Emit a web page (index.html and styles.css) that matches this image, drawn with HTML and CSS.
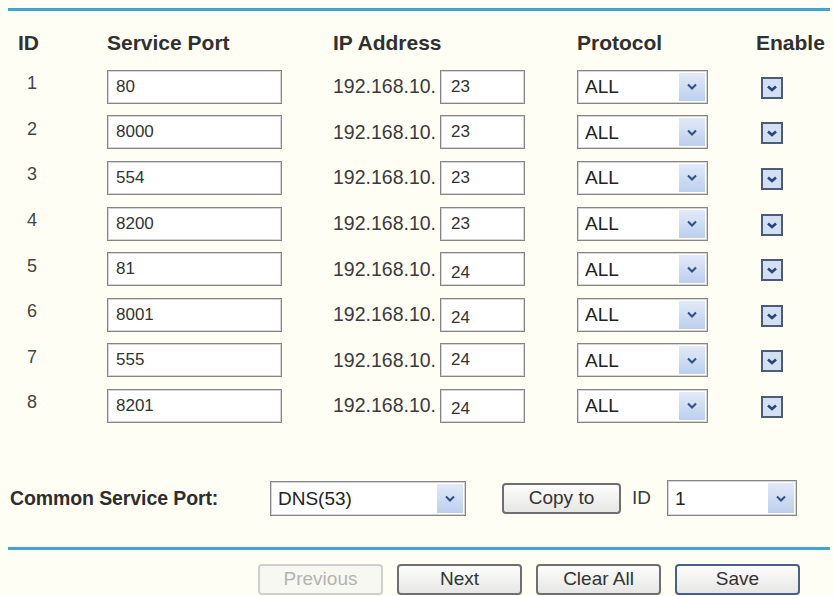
FILE: index.html
```html
<!DOCTYPE html>
<html lang="en">
<head>
    <meta charset="UTF-8">
    <title>Virtual Servers</title>
    <link rel="stylesheet" href="styles.css">
</head>
<body>
    <div class="page">
        <hr class="rule">

        <div class="servers">
            <div class="head id">ID</div>
            <div class="head">Service Port</div>
            <div class="head">IP Address</div>
            <div class="head">Protocol</div>
            <div class="head">Enable</div>

            <div class="num">1</div>
            <div><input class="port" type="text" value="80"></div>
            <div class="ip">192.168.10.<input class="host" type="text" value="23"></div>
            <div><label class="pick proto"><select><option>ALL</option><option>TCP</option><option>UDP</option></select><span class="arrow"><svg width="10" height="7" viewBox="0 0 10 7"><path d="M1 1.5 L5 5.5 L9 1.5" fill="none" stroke="#2f4d86" stroke-width="2"/></svg></span></label></div>
            <div class="enable"><span class="check"><svg width="22" height="22" viewBox="0 0 22 22"><rect x="1" y="1" width="20" height="20" fill="#d3dff3" stroke="#4c5b78" stroke-width="2"/><path d="M7 9.5 L11 13 L15 9.5" fill="none" stroke="#29447a" stroke-width="2.6"/></svg></span></div>

            <div class="num">2</div>
            <div><input class="port" type="text" value="8000"></div>
            <div class="ip">192.168.10.<input class="host" type="text" value="23"></div>
            <div><label class="pick proto"><select><option>ALL</option><option>TCP</option><option>UDP</option></select><span class="arrow"><svg width="10" height="7" viewBox="0 0 10 7"><path d="M1 1.5 L5 5.5 L9 1.5" fill="none" stroke="#2f4d86" stroke-width="2"/></svg></span></label></div>
            <div class="enable"><span class="check"><svg width="22" height="22" viewBox="0 0 22 22"><rect x="1" y="1" width="20" height="20" fill="#d3dff3" stroke="#4c5b78" stroke-width="2"/><path d="M7 9.5 L11 13 L15 9.5" fill="none" stroke="#29447a" stroke-width="2.6"/></svg></span></div>

            <div class="num">3</div>
            <div><input class="port" type="text" value="554"></div>
            <div class="ip">192.168.10.<input class="host" type="text" value="23"></div>
            <div><label class="pick proto"><select><option>ALL</option><option>TCP</option><option>UDP</option></select><span class="arrow"><svg width="10" height="7" viewBox="0 0 10 7"><path d="M1 1.5 L5 5.5 L9 1.5" fill="none" stroke="#2f4d86" stroke-width="2"/></svg></span></label></div>
            <div class="enable"><span class="check"><svg width="22" height="22" viewBox="0 0 22 22"><rect x="1" y="1" width="20" height="20" fill="#d3dff3" stroke="#4c5b78" stroke-width="2"/><path d="M7 9.5 L11 13 L15 9.5" fill="none" stroke="#29447a" stroke-width="2.6"/></svg></span></div>

            <div class="num">4</div>
            <div><input class="port" type="text" value="8200"></div>
            <div class="ip">192.168.10.<input class="host" type="text" value="23"></div>
            <div><label class="pick proto"><select><option>ALL</option><option>TCP</option><option>UDP</option></select><span class="arrow"><svg width="10" height="7" viewBox="0 0 10 7"><path d="M1 1.5 L5 5.5 L9 1.5" fill="none" stroke="#2f4d86" stroke-width="2"/></svg></span></label></div>
            <div class="enable"><span class="check"><svg width="22" height="22" viewBox="0 0 22 22"><rect x="1" y="1" width="20" height="20" fill="#d3dff3" stroke="#4c5b78" stroke-width="2"/><path d="M7 9.5 L11 13 L15 9.5" fill="none" stroke="#29447a" stroke-width="2.6"/></svg></span></div>

            <div class="num">5</div>
            <div><input class="port" type="text" value="81"></div>
            <div class="ip">192.168.10.<input class="host low" type="text" value="24"></div>
            <div><label class="pick proto"><select><option>ALL</option><option>TCP</option><option>UDP</option></select><span class="arrow"><svg width="10" height="7" viewBox="0 0 10 7"><path d="M1 1.5 L5 5.5 L9 1.5" fill="none" stroke="#2f4d86" stroke-width="2"/></svg></span></label></div>
            <div class="enable"><span class="check"><svg width="22" height="22" viewBox="0 0 22 22"><rect x="1" y="1" width="20" height="20" fill="#d3dff3" stroke="#4c5b78" stroke-width="2"/><path d="M7 9.5 L11 13 L15 9.5" fill="none" stroke="#29447a" stroke-width="2.6"/></svg></span></div>

            <div class="num">6</div>
            <div><input class="port" type="text" value="8001"></div>
            <div class="ip">192.168.10.<input class="host low" type="text" value="24"></div>
            <div><label class="pick proto"><select><option>ALL</option><option>TCP</option><option>UDP</option></select><span class="arrow"><svg width="10" height="7" viewBox="0 0 10 7"><path d="M1 1.5 L5 5.5 L9 1.5" fill="none" stroke="#2f4d86" stroke-width="2"/></svg></span></label></div>
            <div class="enable"><span class="check"><svg width="22" height="22" viewBox="0 0 22 22"><rect x="1" y="1" width="20" height="20" fill="#d3dff3" stroke="#4c5b78" stroke-width="2"/><path d="M7 9.5 L11 13 L15 9.5" fill="none" stroke="#29447a" stroke-width="2.6"/></svg></span></div>

            <div class="num">7</div>
            <div><input class="port" type="text" value="555"></div>
            <div class="ip">192.168.10.<input class="host" type="text" value="24"></div>
            <div><label class="pick proto"><select><option>ALL</option><option>TCP</option><option>UDP</option></select><span class="arrow"><svg width="10" height="7" viewBox="0 0 10 7"><path d="M1 1.5 L5 5.5 L9 1.5" fill="none" stroke="#2f4d86" stroke-width="2"/></svg></span></label></div>
            <div class="enable"><span class="check"><svg width="22" height="22" viewBox="0 0 22 22"><rect x="1" y="1" width="20" height="20" fill="#d3dff3" stroke="#4c5b78" stroke-width="2"/><path d="M7 9.5 L11 13 L15 9.5" fill="none" stroke="#29447a" stroke-width="2.6"/></svg></span></div>

            <div class="num">8</div>
            <div><input class="port" type="text" value="8201"></div>
            <div class="ip">192.168.10.<input class="host low" type="text" value="24"></div>
            <div><label class="pick proto"><select><option>ALL</option><option>TCP</option><option>UDP</option></select><span class="arrow"><svg width="10" height="7" viewBox="0 0 10 7"><path d="M1 1.5 L5 5.5 L9 1.5" fill="none" stroke="#2f4d86" stroke-width="2"/></svg></span></label></div>
            <div class="enable"><span class="check"><svg width="22" height="22" viewBox="0 0 22 22"><rect x="1" y="1" width="20" height="20" fill="#d3dff3" stroke="#4c5b78" stroke-width="2"/><path d="M7 9.5 L11 13 L15 9.5" fill="none" stroke="#29447a" stroke-width="2.6"/></svg></span></div>
        </div>

        <div class="common">
            <span class="common-label">Common Service Port:</span>
            <label class="pick service"><select><option>DNS(53)</option><option>FTP(21)</option><option>HTTP(80)</option><option>SMTP(25)</option></select><span class="arrow"><svg width="10" height="7" viewBox="0 0 10 7"><path d="M1 1.5 L5 5.5 L9 1.5" fill="none" stroke="#2f4d86" stroke-width="2"/></svg></span></label>
            <button class="btn copy">Copy to</button>
            <span class="id-label">ID</span>
            <label class="pick target"><select><option>1</option><option>2</option><option>3</option><option>4</option><option>5</option><option>6</option><option>7</option><option>8</option></select><span class="arrow"><svg width="10" height="7" viewBox="0 0 10 7"><path d="M1 1.5 L5 5.5 L9 1.5" fill="none" stroke="#2f4d86" stroke-width="2"/></svg></span></label>
        </div>

        <hr class="rule bottom">

        <div class="actions">
            <button class="btn" disabled>Previous</button>
            <button class="btn">Next</button>
            <button class="btn">Clear All</button>
            <button class="btn save">Save</button>
        </div>
    </div>
</body>
</html>
```

FILE: styles.css
```css
body {
    margin: 0;
    background: #fffef5;
    font-family: 'Liberation Sans', Arial, sans-serif;
    color: #353535;
}

.page {
    width: 822px;
    padding: 8px 0 0 8px;
}

.rule {
    height: 3px;
    margin: 0;
    border: none;
    background: #45a3cf;
}

.rule.bottom {
    margin-top: 31px;
}

/* table of forwarded ports */
.servers {
    display: grid;
    grid-template-columns: 99px 226px 244px 179px 1fr;
    grid-template-rows: 53px;
    grid-auto-rows: 45.6px;
    align-items: center;
}

.head {
    align-self: start;
    padding-top: 20px;
    font-size: 21px;
    line-height: 23px;
    font-weight: bold;
    color: #303030;
}

.head.id {
    padding-left: 10px;
}

.num {
    padding-left: 19px;
    padding-bottom: 6px;
    font-size: 18px;
    color: #444;
}

input[type="text"] {
    box-sizing: border-box;
    height: 34px;
    margin: 0;
    padding: 0 8px;
    border: 1px solid #858585;
    box-shadow: inset 0 0 0 1px #d6d6d6;
    background: #fff;
    font-family: 'Liberation Sans', Arial, sans-serif;
    font-size: 17px;
    color: #333;
    outline: none;
}

.port {
    width: 175px;
}

.ip {
    display: flex;
    align-items: center;
    font-size: 19.5px;
    color: #3a3a3a;
}

.host {
    width: 85px;
    margin-left: 4px !important;
    padding-left: 10px !important;
}

.host.low {
    padding-top: 7px !important;
}

/* drop-down with the blue arrow button */
.pick {
    position: relative;
    display: inline-block;
    box-sizing: border-box;
    height: 34px;
    border: 1px solid #858585;
    box-shadow: inset 0 0 0 1px #d6d6d6;
    background: #fff;
}

.pick select {
    appearance: none;
    width: 100%;
    height: 100%;
    padding: 0 0 0 7px;
    border: none;
    background: transparent;
    font-family: 'Liberation Sans', Arial, sans-serif;
    font-size: 19px;
    color: #222;
    outline: none;
}

.pick .arrow {
    position: absolute;
    top: 2px;
    right: 2px;
    bottom: 2px;
    width: 26px;
    display: flex;
    align-items: center;
    justify-content: center;
    background: linear-gradient(#e2eaf8, #bccfee);
    pointer-events: none;
}

.proto {
    width: 131px;
}

.enable {
    padding-left: 5px;
    padding-top: 2px;
}

.check {
    display: block;
    width: 22px;
    height: 22px;
}

/* common service row */
.common {
    display: flex;
    align-items: center;
    height: 35px;
    margin-top: 52px;
    padding-left: 2px;
}

.common-label {
    width: 260px;
    font-size: 19.5px;
    font-weight: bold;
    letter-spacing: -0.1px;
    color: #2e2e2e;
}

.service {
    width: 196px;
    height: 35px;
}

.target {
    width: 130px;
    height: 36px;
}

.id-label {
    margin: 0 16px 0 11px;
    font-size: 19px;
    color: #3a3a3a;
}

.btn {
    box-sizing: border-box;
    width: 125px;
    height: 31px;
    padding: 0;
    border: 2px solid #6f6f6f;
    border-radius: 4px;
    background: linear-gradient(#fdfdfd, #e6e6e4);
    font-family: 'Liberation Sans', Arial, sans-serif;
    font-size: 19px;
    color: #333;
}

.btn.copy {
    width: 119px;
    margin-left: 36px;
}

.btn:disabled {
    border-color: #cfcfcf;
    background: #f8f8f3;
    color: #b3b3b3;
}

.btn.save {
    border-color: #46618e;
}

.actions {
    display: flex;
    justify-content: flex-end;
    gap: 14px;
    margin-top: 14px;
    padding-right: 30px;
}
```
